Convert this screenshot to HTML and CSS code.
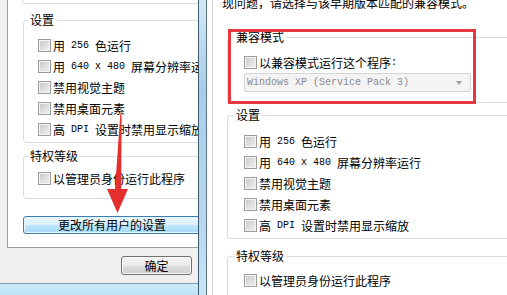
FILE: index.html
```html
<!DOCTYPE html>
<html>
<head>
    <meta charset="utf-8">
    <title>兼容性</title>
    <link rel="stylesheet" href="styles.css">
</head>
<body>
    <div class="screen">
        <div class="win-left">
            <div class="dlg">
                <div class="pane">
                    <div class="gb-tail"></div>
                    <fieldset class="gb gb-l gb-set-l">
                        <legend>设置</legend>
                        <label class="chk"><span class="box"></span>用<span class="lat"> 256 </span>色运行</label>
                        <label class="chk"><span class="box"></span>用<span class="lat"> 640 x 480 </span>屏幕分辨率运行</label>
                        <label class="chk"><span class="box"></span>禁用视觉主题</label>
                        <label class="chk"><span class="box"></span>禁用桌面元素</label>
                        <label class="chk"><span class="box"></span>高<span class="lat"> DPI </span>设置时禁用显示缩放</label>
                    </fieldset>
                    <fieldset class="gb gb-l gb-priv-l">
                        <legend>特权等级</legend>
                        <label class="chk"><span class="box"></span>以管理员身份运行此程序</label>
                    </fieldset>
                    <button class="btn btn-hot" type="button">更改所有用户的设置</button>
                </div>
                <div class="dlg-foot">
                    <button class="btn btn-ok" type="button">确定</button>
                </div>
                <div class="frame-bottom"></div>
            </div>
            <div class="frame-right"></div>
            <!-- annotation arrow -->
            <svg class="arrow" width="207" height="295" viewBox="0 0 207 295">
                <polygon points="120.4,113 121.6,113 121.2,192 114.8,192" fill="#e3302f" />
                <polygon points="107,189 128,189 117.5,213" fill="#e3302f" />
            </svg>
        </div>

        <div class="win-right">
            <div class="pane-r">
                <div class="intro">现问题，请选择与该早期版本匹配的兼容模式。</div>
                <fieldset class="gb gb-r gb-compat">
                    <legend>兼容模式</legend>
                    <label class="chk"><span class="box"></span>以兼容模式运行这个程序<span class="lat">:</span></label>
                    <div class="combo">
                        <span>Windows XP (Service Pack 3)</span>
                        <span class="caret"></span>
                    </div>
                </fieldset>
                <fieldset class="gb gb-r gb-set-r">
                    <legend>设置</legend>
                    <label class="chk"><span class="box"></span>用<span class="lat"> 256 </span>色运行</label>
                    <label class="chk"><span class="box"></span>用<span class="lat"> 640 x 480 </span>屏幕分辨率运行</label>
                    <label class="chk"><span class="box"></span>禁用视觉主题</label>
                    <label class="chk"><span class="box"></span>禁用桌面元素</label>
                    <label class="chk"><span class="box"></span>高<span class="lat"> DPI </span>设置时禁用显示缩放</label>
                </fieldset>
                <fieldset class="gb gb-r gb-priv-r">
                    <legend>特权等级</legend>
                    <label class="chk"><span class="box"></span>以管理员身份运行此程序</label>
                </fieldset>
            </div>
            <div class="mark"></div>
        </div>
    </div>
</body>
</html>
```

FILE: styles.css
```css
body {
    margin: 0;
    font-family: "Noto Sans CJK SC", "Liberation Sans", sans-serif;
    font-size: 12px;
    line-height: 14px;
    color: #000000;
    background-color: #FFFFFF;
}

.screen {
    display: flex;
    width: 507px;
    height: 295px;
    overflow: hidden;
}

/* left dialog */
.win-left {
    position: relative;
    display: flex;
    flex: none;
    width: 207px;
    height: 295px;
}

.dlg {
    display: flex;
    flex-direction: column;
    width: 198px;
    background-color: #F0F0F0;
    overflow: hidden;
}

.pane {
    flex: none;
    height: 248px;
    margin-left: 7px;
    box-sizing: border-box;
    background-color: #FFFFFF;
    border-left: 1px solid #A0A0A0;
    border-bottom: 1px solid #A0A0A0;
    overflow: hidden;
}

.gb-tail {
    width: 200px;
    height: 3px;
    margin-left: 14px;
    border-left: 1px solid #D5DFE5;
    border-bottom: 1px solid #D5DFE5;
    border-bottom-left-radius: 3px;
}

.gb {
    margin: 0;
    min-width: 0;
    box-sizing: border-box;
    border: 1px solid #D5DFE5;
    border-radius: 3px;
}

.gb legend {
    padding: 0 2px;
    line-height: 14px;
}

.gb-l {
    width: 200px;
    margin-left: 15px;
    padding: 0 0 0 4px;
}

.gb-set-l {
    margin-top: 9px;
    padding-top: 8px;
    padding-bottom: 2px;
}

.gb-priv-l {
    margin-top: 6px;
    padding-top: 5px;
    padding-bottom: 9px;
}

.chk {
    display: flex;
    align-items: center;
    height: 21px;
    margin-left: 10px;
    white-space: nowrap;
}

.box {
    flex: none;
    width: 13px;
    height: 13px;
    margin-right: 2px;
    box-sizing: border-box;
    border: 1px solid #9C9C9C;
    background: linear-gradient(135deg, #C8C8C8, #F2F2F2);
    box-shadow: inset 0 0 0 1px #F4F4F4;
}

.lat {
    font-family: "Liberation Mono", monospace;
    font-size: 10px;
    white-space: pre;
}

.btn {
    display: block;
    padding: 0;
    font-family: "Noto Sans CJK SC", "Liberation Sans", sans-serif;
    font-size: 12px;
    line-height: 14px;
    color: #000000;
    border: 1px solid #707070;
    border-radius: 3px;
    background: linear-gradient(#F2F2F2 0%, #EBEBEB 50%, #DDDDDD 51%, #CFCFCF 100%);
    box-shadow: inset 0 0 0 1px #FBFBFB;
}

.btn-hot {
    width: 178px;
    height: 18px;
    margin: 17px 0 0 15px;
    border-color: #3C7FB1;
    background: linear-gradient(#EAF6FD 0%, #D9F0FC 50%, #BEE6FD 51%, #A7D9F5 100%);
    box-shadow: inset 0 0 0 1px #E8F5FC;
}

.dlg-foot {
    flex: none;
    display: flex;
    justify-content: flex-end;
    height: 35px;
    padding: 8px 6px 0 0;
    box-sizing: border-box;
}

.btn-ok {
    width: 71px;
    height: 19px;
}

.frame-bottom {
    flex: 1;
    border-top: 1px solid #7A9BB3;
    background: linear-gradient(#CDEBF9, #BDE2F5);
}

.frame-right {
    flex: none;
    width: 9px;
    box-sizing: border-box;
    border-left: 1px solid #3D5A70;
    border-right: 1px solid #5B7488;
    background: linear-gradient(#D2E8F6, #A9CDE9 30%, #B9D9EF 80%, #C8E6F6);
}

.arrow {
    position: absolute;
    left: 0;
    top: 0;
    pointer-events: none;
}

/* right dialog */
.win-right {
    position: relative;
    flex: 1;
    padding-left: 5px;
    background-color: #FFFFFF;
}

.pane-r {
    height: 100%;
    border-left: 1px solid #D0D0D0;
    overflow: hidden;
}

.intro {
    margin: -4px 0 0 9px;
    white-space: nowrap;
}

.gb-r {
    width: 300px;
    margin-left: 14px;
    padding: 0 0 0 6px;
    border-color: #DCDCDC;
}

.gb-compat {
    margin-top: 20px;
    padding-top: 8px;
    padding-bottom: 10px;
}

.gb-set-r {
    margin-top: 5px;
    padding-top: 9px;
    padding-bottom: 2px;
}

.gb-priv-r {
    margin-top: 10px;
    padding-top: 7px;
    padding-bottom: 10px;
}

.combo {
    display: flex;
    align-items: center;
    justify-content: space-between;
    width: 227px;
    height: 19px;
    margin-left: 10px;
    padding: 0 8px 0 2px;
    box-sizing: border-box;
    border: 1px solid #D4D4D4;
    border-radius: 2px;
    background-color: #F4F4F4;
    font-family: "Liberation Mono", monospace;
    font-size: 10px;
    color: #8A8A8A;
    white-space: pre;
}

.caret {
    width: 0;
    height: 0;
    border-left: 3px solid transparent;
    border-right: 3px solid transparent;
    border-top: 4px solid #A3A3A3;
}

.mark {
    position: absolute;
    left: 21px;
    top: 29px;
    width: 248px;
    height: 75px;
    box-sizing: border-box;
    border: 3px solid #E5383F;
}
```
